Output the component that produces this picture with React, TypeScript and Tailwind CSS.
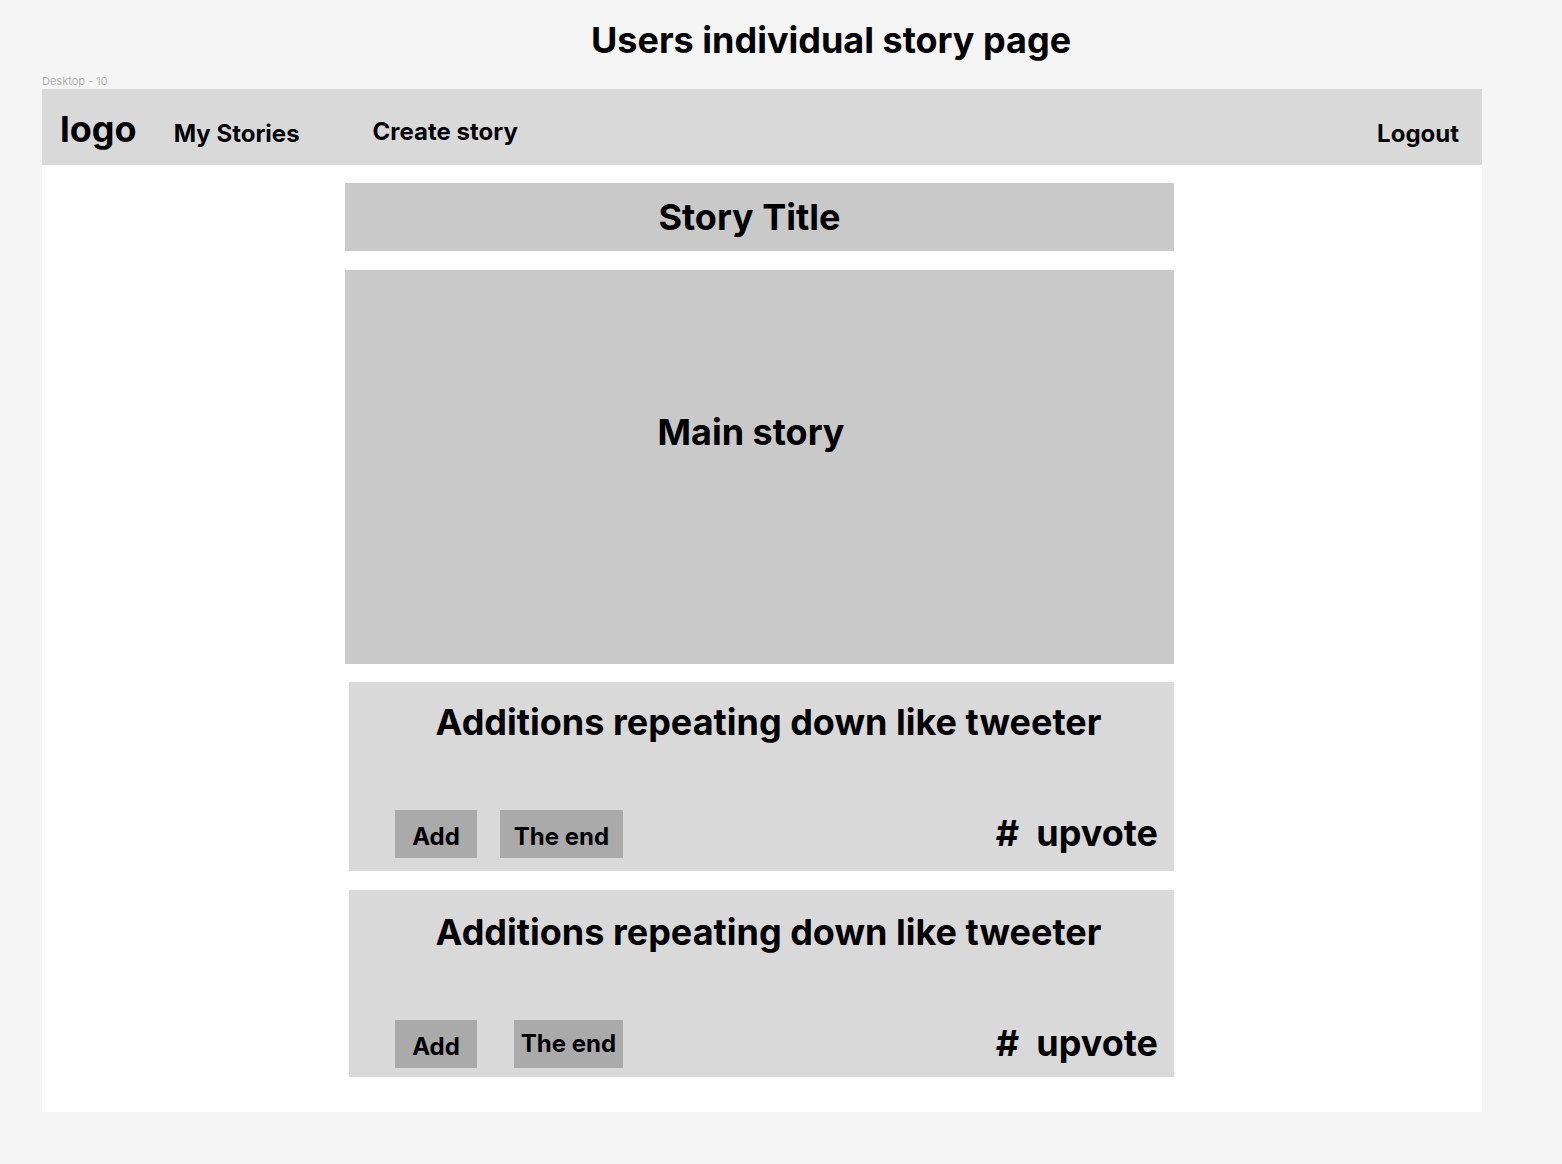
import React from "react";

const font = { fontFamily: "Inter, 'Noto Sans', sans-serif" };

function Addition({ endGap, endW, btnTop, bottomPad, h, headPad }: { endGap: string; endW: string; btnTop: string; bottomPad: string; h: string; headPad: string }) {
  return (
    <div className={`ml-[4px] w-[825px] ${h} bg-[#d9d9d9] flex flex-col`}>
      <div className={`${headPad} pl-[14px] text-center text-[36px] leading-[44px] font-bold text-black`}>
        Additions repeating down like tweeter
      </div>
      <div className={`mt-auto ${bottomPad} pl-[46px] pr-[16px] flex items-end`}>
        <div className="w-[82px] h-[48px] bg-[#aaaaaa] flex items-center justify-center pt-[5px] text-[24px] font-bold text-black">
          Add
        </div>
        <div className={`${endGap} ${endW} h-[48px] bg-[#aaaaaa] flex items-center justify-center ${btnTop} text-[24px] font-bold text-black`}>
          The end
        </div>
        <div className="ml-auto whitespace-pre text-[36px] leading-[44px] font-bold text-black mb-[3px]">
          {"#  upvote"}
        </div>
      </div>
    </div>
  );
}

export default function App() {
  return (
    <div className="min-h-[1164px] bg-[#f5f5f5] pt-[18px]" style={font}>
      <h1 className="pl-[591px] text-[36px] leading-[44px] font-bold text-black">Users individual story page</h1>
      <div className="mt-[12px] pl-[42px] text-[11px] leading-[14px] text-[#b3b3b3]">Desktop - 10</div>
      <div className="mt-[1px] ml-[42px] w-[1440px] h-[1023px] bg-white">
        <nav className="h-[76px] bg-[#d9d9d9] flex items-baseline pt-[18px] pl-[18px] pr-[23px] text-black font-bold">
          <span className="text-[36px] leading-[44px]">logo</span>
          <span className="ml-[37px] text-[24px] leading-[29px]">My Stories</span>
          <span className="ml-[73px] text-[24px] leading-[29px] relative -top-[2px]">Create story</span>
          <span className="ml-auto text-[24px] leading-[29px]">Logout</span>
        </nav>
        <div className="ml-[303px] w-[829px] flex flex-col">
          <div className="mt-[18px] h-[68px] bg-[#c9c9c9] flex items-center justify-center pr-[20px] text-[36px] leading-[44px] font-bold text-black">
            Story Title
          </div>
          <div className="mt-[19px] h-[394px] bg-[#c9c9c9] pt-[140px] pr-[17px] text-center text-[36px] leading-[44px] font-bold text-black">
            Main story
          </div>
          <div className="mt-[18px]">
            <Addition h="h-[189px]" headPad="pt-[18px]" endGap="ml-[23px]" endW="w-[123px]" btnTop="pt-[5px]" bottomPad="pb-[13px]" />
          </div>
          <div className="mt-[19px]">
            <Addition h="h-[187px]" headPad="pt-[20px]" endGap="ml-[37px]" endW="w-[109px]" btnTop="pb-[1px]" bottomPad="pb-[9px]" />
          </div>
        </div>
      </div>
    </div>
  );
}
